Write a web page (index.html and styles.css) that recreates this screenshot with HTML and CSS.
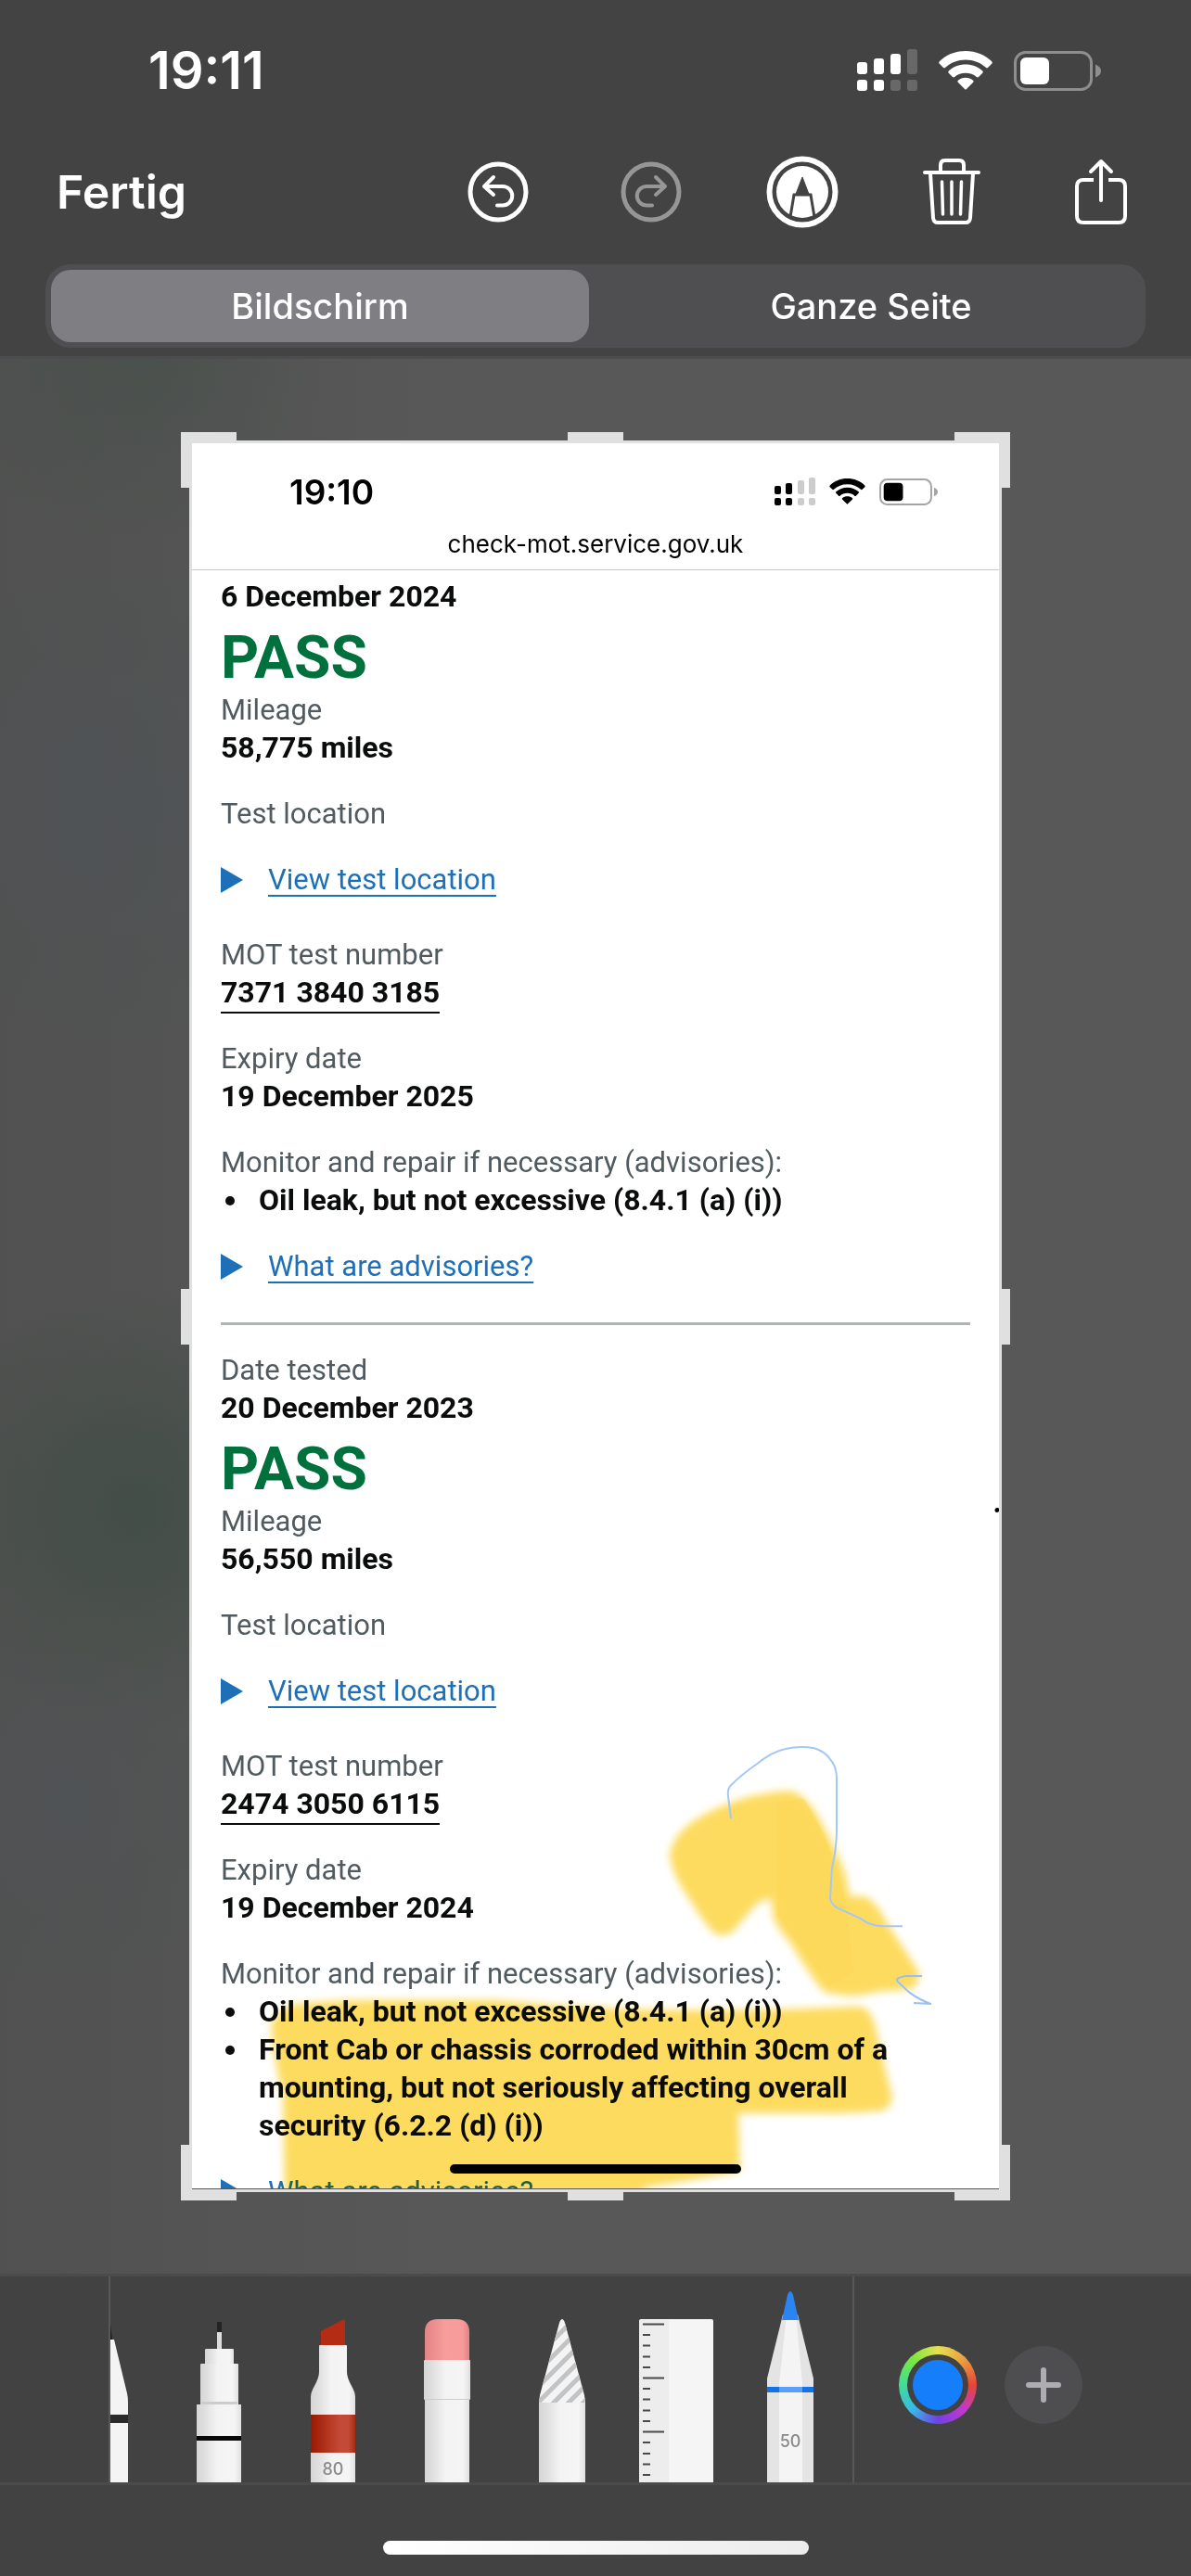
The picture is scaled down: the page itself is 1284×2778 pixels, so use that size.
FILE: index.html
```html
<!DOCTYPE html>
<html lang="de">
<head>
    <meta charset="UTF-8">
    <meta name="viewport" content="width=device-width, initial-scale=1.0">
    <title>Bildschirmfoto</title>
    <link rel="stylesheet" href="styles.css">
</head>
<body>
    <header class="top">
        <div class="status">
            <span class="clock">19:11</span>
            <div class="status-icons">
                <svg width="65" height="46" viewBox="0 0 65 46" fill="#fff">
                    <rect x="0" y="14" width="11" height="13" rx="3"/>
                    <rect x="18" y="10" width="11" height="17" rx="3"/>
                    <rect x="36" y="5" width="11" height="22" rx="3"/>
                    <rect x="54" y="0" width="11" height="27" rx="3" fill="#686868"/>
                    <rect x="0" y="33" width="11" height="12" rx="3"/>
                    <rect x="18" y="33" width="11" height="12" rx="3"/>
                    <rect x="36" y="33" width="11" height="12" rx="3" fill="#686868"/>
                    <rect x="54" y="33" width="11" height="12" rx="3" fill="#686868"/>
                </svg>
                <svg width="58" height="42" viewBox="0 0 58 42" fill="#fff">
                    <path d="M29 0C18 0 8 4 .8 11.200Q-.3 12.500.8 13.800L4.800 17.800Q6 18.800 7.200 17.800C13 12.500 20.500 9.500 29 9.500S45 12.500 50.800 17.800Q52 18.800 53.200 17.800L57.200 13.800Q58.300 12.500 57.200 11.200C50 4 40 0 29 0z"/>
                    <path d="M29 14.500C22 14.500 15.500 17 10.700 21.500Q9.700 22.700 10.700 23.800L15 28Q16 28.800 17.200 28C20.500 25.200 24.500 23.800 29 23.800S37.500 25.200 40.800 28Q42 28.800 43 28L47.300 23.800Q48.300 22.700 47.300 21.500C42.500 17 36 14.500 29 14.500z"/>
                    <path d="M29 28.800C26 28.800 23 29.800 20.800 31.700Q19.800 32.800 20.800 33.800L28 41Q29 42 30 41L37.200 33.800Q38.200 32.800 37.200 31.700C35 29.800 32 28.800 29 28.800z"/>
                </svg>
                <svg width="94" height="43" viewBox="0 0 94 43">
                    <rect x="1.500" y="1.500" width="82" height="40" rx="11" fill="none" stroke="#8e8e8e" stroke-width="3"/>
                    <rect x="7" y="7" width="31" height="29" rx="6" fill="#fff"/>
                    <path d="M88 14.500Q94 17 94 21.500T88 28.500z" fill="#8e8e8e"/>
                </svg>
            </div>
        </div>
        <nav class="actions">
            <button class="done">Fertig</button>
            <div class="action-icons">
                <button class="icon-btn wide" aria-label="Widerrufen">
                    <svg width="66" height="66" viewBox="0 0 66 66" fill="none" stroke="#fff" stroke-width="4" stroke-linecap="round" stroke-linejoin="round">
                        <circle cx="33" cy="33" r="30" stroke-width="5"/>
                        <path d="M28 17L18 27L28 36M18 27H38A10 10 0 0 1 38 47.500H32"/>
                    </svg>
                </button>
                <button class="icon-btn wide" aria-label="Wiederholen" disabled>
                    <svg width="66" height="66" viewBox="0 0 66 66" fill="none" stroke="#969696" stroke-width="4" stroke-linecap="round" stroke-linejoin="round">
                        <circle cx="33" cy="33" r="30" stroke-width="5"/>
                        <path d="M38 17L48 27L38 36M48 27H28A10 10 0 0 0 28 47.500H34"/>
                    </svg>
                </button>
                <button class="icon-btn" aria-label="Markierung">
                    <svg width="78" height="78" viewBox="0 0 78 78">
                        <circle cx="39" cy="39" r="35.500" fill="none" stroke="#fff" stroke-width="6"/>
                        <circle cx="39" cy="39" r="28" fill="#fff"/>
                        <path d="M39 23L46.500 42.500H31.500z" fill="#434343" stroke="#434343" stroke-width="1"/>
                        <path d="M26 66L30 42H48L52 66" fill="none" stroke="#434343" stroke-width="3"/>
                    </svg>
                </button>
                <button class="icon-btn" aria-label="Löschen">
                    <svg width="62" height="72" viewBox="0 0 62 72" fill="none" stroke="#fff" stroke-width="4" stroke-linecap="round" stroke-linejoin="round">
                        <path d="M2 15H60"/>
                        <path d="M19 14V7Q19 2 24 2H39Q44 2 44 7V14"/>
                        <path d="M8 16L11 64Q11.500 69 16 69H46Q50.500 69 51 64L54 16"/>
                        <path d="M20.500 25L21.500 60M31 25V60M41.500 25L40.500 60" stroke-width="3.500"/>
                    </svg>
                </button>
                <button class="icon-btn" aria-label="Teilen">
                    <svg width="58" height="72" viewBox="0 0 58 72" fill="none" stroke="#fff" stroke-width="4" stroke-linecap="round" stroke-linejoin="round">
                        <path d="M21 23H10Q3 23 3 30V62Q3 69 10 69H48Q55 69 55 62V30Q55 23 48 23H37" stroke-linecap="butt"/>
                        <path d="M29 45V3M18 14L29 3L40 14"/>
                    </svg>
                </button>
            </div>
        </nav>
        <div class="segments">
            <button class="segment active" aria-pressed="true">Bildschirm</button>
            <button class="segment" aria-pressed="false">Ganze Seite</button>
        </div>
    </header>

    <main class="canvas">
        <div class="crop">
            <article class="page" lang="en">
                <div class="page-status">
                    <span class="page-clock">19:10</span>
                    <div class="page-icons">
                        <svg width="44" height="31" viewBox="0 0 44 31">
                            <rect x="0" y="9" width="7" height="9" rx="2"/>
                            <rect x="12" y="6" width="7" height="12" rx="2"/>
                            <rect x="25" y="3" width="7" height="15" rx="2" fill="#ccc"/>
                            <rect x="37" y="0" width="7" height="18" rx="2" fill="#ccc"/>
                            <rect x="0" y="22" width="7" height="8" rx="2"/>
                            <rect x="12" y="22" width="7" height="8" rx="2"/>
                            <rect x="25" y="22" width="7" height="8" rx="2" fill="#ccc"/>
                            <rect x="37" y="22" width="7" height="8" rx="2" fill="#ccc"/>
                        </svg>
                        <svg width="39" height="28" viewBox="0 0 58 42">
                            <path d="M29 0C18 0 8 4 .8 11.200Q-.3 12.500.8 13.800L4.800 17.800Q6 18.800 7.200 17.800C13 12.500 20.500 9.500 29 9.500S45 12.500 50.800 17.800Q52 18.800 53.200 17.800L57.200 13.800Q58.300 12.500 57.200 11.200C50 4 40 0 29 0z"/>
                            <path d="M29 14.500C22 14.500 15.500 17 10.700 21.500Q9.700 22.700 10.700 23.800L15 28Q16 28.800 17.200 28C20.500 25.200 24.500 23.800 29 23.800S37.500 25.200 40.800 28Q42 28.800 43 28L47.300 23.800Q48.300 22.700 47.300 21.500C42.500 17 36 14.500 29 14.500z"/>
                            <path d="M29 28.800C26 28.800 23 29.800 20.800 31.700Q19.800 32.800 20.800 33.800L28 41Q29 42 30 41L37.200 33.800Q38.200 32.800 37.200 31.700C35 29.800 32 28.800 29 28.800z"/>
                        </svg>
                        <svg width="63" height="29" viewBox="0 0 94 43">
                            <rect x="1.500" y="1.500" width="82" height="40" rx="11" fill="none" stroke="#a5a5a5" stroke-width="3"/>
                            <rect x="7" y="7" width="31" height="29" rx="6"/>
                            <path d="M88 14.500Q94 17 94 21.500T88 28.500z" fill="#a5a5a5"/>
                        </svg>
                    </div>
                </div>
                <div class="address">check-mot.service.gov.uk</div>

                <section class="test">
                    <div class="value">6 December 2024</div>
                    <div class="result">PASS</div>
                    <div class="label">Mileage</div>
                    <div class="value">58,775 miles</div>
                    <div class="label spaced">Test location</div>
                    <details class="details">
                        <summary><span>View test location</span></summary>
                    </details>
                    <div class="label after-details">MOT test number</div>
                    <div class="value"><span class="number">7371 3840 3185</span></div>
                    <div class="label spaced">Expiry date</div>
                    <div class="value">19 December 2025</div>
                    <div class="label spaced">Monitor and repair if necessary (advisories):</div>
                    <ul class="defects">
                        <li>Oil leak, but not excessive (8.4.1 (a) (i))</li>
                    </ul>
                    <details class="details">
                        <summary><span>What are advisories?</span></summary>
                    </details>
                </section>

                <section class="test next">
                    <div class="label">Date tested</div>
                    <div class="value">20 December 2023</div>
                    <div class="result">PASS</div>
                    <div class="label">Mileage</div>
                    <div class="value">56,550 miles</div>
                    <div class="label spaced">Test location</div>
                    <details class="details">
                        <summary><span>View test location</span></summary>
                    </details>
                    <div class="label after-details">MOT test number</div>
                    <div class="value"><span class="number">2474 3050 6115</span></div>
                    <div class="label spaced">Expiry date</div>
                    <div class="value">19 December 2024</div>
                    <div class="label spaced">Monitor and repair if necessary (advisories):</div>
                    <ul class="defects">
                        <li>Oil leak, but not excessive (8.4.1 (a) (i))</li>
                        <li>Front Cab or chassis corroded within 30cm of a mounting, but not seriously affecting overall security (6.2.2 (d) (i))</li>
                    </ul>
                    <details class="details">
                        <summary><span>What are advisories?</span></summary>
                    </details>
                </section>

                <div class="page-home"></div>

                <!-- marker and pencil strokes -->
                <svg class="ink" viewBox="207 478 870 1883" preserveAspectRatio="none">
                    <defs>
                        <filter id="soft" x="-5%" y="-5%" width="110%" height="110%"><feGaussianBlur stdDeviation="4"/></filter>
                    </defs>
                    <g fill="#fddb5f" filter="url(#soft)">
                        <path d="M722 2002C724 1984 738 1970 755 1960Q778 1947 805 1939Q836 1932 852 1932Q864 1934 878 1953Q902 1994 912 2024Q914 2036 916 2046Q928 2044 937 2048Q950 2060 956 2074L991 2128Q990 2140 984 2146L946 2149Q928 2154 911 2153Q896 2152 887 2148Q870 2126 852 2096Q838 2080 834 2070L831 2048Q820 2050 813 2057L790 2084Q778 2092 768 2084Q756 2070 746 2053Q724 2022 722 2002z"/>
                        <path d="M292 2185Q300 2166 321 2162Q370 2157 416 2158H534L592 2163Q700 2171 840 2168L920 2165Q934 2164 938 2172Q945 2186 950 2214L962 2263Q960 2274 952 2277Q920 2281 887 2280H796L798 2342Q760 2350 700 2359L690 2366H307L305 2263Q300 2240 295 2212z"/>
                    </g>
                    <path d="M838 1945L866 1940Q890 1975 905 2024L912 2054L920 2128L893 2142L838 2066z" fill="#fcd755" opacity=".5"/>
                    <path d="M788 1962L785 1938Q784 1930 788 1926Q800 1914 816 1903Q832 1890 846 1887Q862 1883 878 1886Q890 1890 895 1898Q902 1906 902 1918L902 1974Q902 1994 897 2015L895 2048Q896 2054 902 2058L928 2070Q938 2078 952 2078H973" fill="none" stroke="#a4c8f5" stroke-width="2"/>
                    <path d="M994 2132L976 2132Q964 2134 968 2138L981 2150Q992 2158 1004 2162L985 2161" fill="none" stroke="#96bff3" stroke-width="2"/>
                    <circle cx="1075" cy="1629" r="2.500"/>
                </svg>
            </article>
            <span class="handle tl"></span><span class="handle tc"></span><span class="handle tr"></span>
            <span class="handle ml"></span><span class="handle mr"></span>
            <span class="handle bl"></span><span class="handle bc"></span><span class="handle br"></span>
        </div>
    </main>

    <footer class="bottom">
        <div class="toolbar">
            <div class="tools">
                <button class="tool" aria-label="Stift">
                    <svg width="19" height="206" viewBox="0 0 19 206">
                        <path d="M0 36L2 52H0z" fill="#1c1c1c"/>
                        <path d="M0 52H4L18 110Q19 114 19 120V206H0z" fill="#f4f4f4"/>
                        <rect y="133" width="19" height="9" fill="#2a2a2a"/>
                    </svg>
                </button>
                <button class="tool" aria-label="Fineliner">
                    <svg width="48" height="206" viewBox="0 0 48 206">
                        <defs>
                            <linearGradient id="body">
                                <stop offset="0" stop-color="#d6d6d6"/><stop offset=".18" stop-color="#dfdfdf"/>
                                <stop offset=".45" stop-color="#f3f3f3"/><stop offset=".85" stop-color="#f5f5f5"/><stop offset="1" stop-color="#e0e0e0"/>
                            </linearGradient>
                        </defs>
                        <rect x="22" y="33" width="5" height="12" fill="#242424"/>
                        <rect x="22" y="44" width="5" height="18" fill="#ddd"/>
                        <rect x="9" y="62" width="31" height="17" rx="1" fill="url(#body)"/>
                        <rect x="4" y="78" width="41" height="45" rx="1" fill="url(#body)"/>
                        <rect x="5" y="119" width="39" height="3" fill="#ccc"/>
                        <rect x="0" y="122" width="48" height="84" fill="url(#body)"/>
                        <rect x="0" y="156" width="48" height="5" fill="#080808"/>
                    </svg>
                </button>
                <button class="tool" aria-label="Textmarker">
                    <svg width="50" height="206" viewBox="0 0 50 206">
                        <defs>
                            <linearGradient id="red"><stop offset="0" stop-color="#9c1800"/><stop offset=".65" stop-color="#c34a36"/><stop offset=".85" stop-color="#c34a36"/><stop offset="1" stop-color="#a32a14"/></linearGradient>
                        </defs>
                        <path d="M12 58V43L37 30Q38 30 38 32V58z" fill="#b52c14"/>
                        <path d="M10 59Q10 58 11 58H39Q40 58 40 59V87Q40 93 45 102Q49 109 49 114V206H1V114Q1 109 5 102Q10 93 10 87z" fill="url(#body)"/>
                        <rect x="1" y="133" width="48" height="41" fill="url(#red)"/>
                        <text class="size" x="25" y="198" text-anchor="middle">80</text>
                    </svg>
                </button>
                <button class="tool" aria-label="Radierer">
                    <svg width="50" height="206" viewBox="0 0 50 206">
                        <defs>
                            <linearGradient id="pink"><stop offset="0" stop-color="#e38485"/><stop offset=".45" stop-color="#f89c9c"/><stop offset=".85" stop-color="#f69a9a"/><stop offset="1" stop-color="#e08383"/></linearGradient>
                        </defs>
                        <path d="M1 76V44Q1 30 15 30H35Q49 30 49 44V76z" fill="url(#pink)"/>
                        <rect x="1" y="110" width="48" height="96" fill="url(#body)"/>
                        <rect x="0" y="74" width="50" height="43" rx="1" fill="url(#body)"/>
                        <rect x="1" y="116" width="48" height="1" fill="#ccc"/>
                    </svg>
                </button>
                <button class="tool" aria-label="Lasso">
                    <svg width="50" height="206" viewBox="0 0 50 206">
                        <defs>
                            <clipPath id="cone"><path d="M0 120L1 112L22 34Q25 26 28 34L49 112L50 120z"/></clipPath>
                        </defs>
                        <g clip-path="url(#cone)">
                            <rect width="50" height="120" y="20" fill="#f4f4f4"/>
                            <path d="M-4 72L58 10M-4 89L58 27M-4 106L58 44M-4 123L58 61M-4 140L58 78M12 140L58 94M28 140L58 110" stroke="#c2c3c5" stroke-width="5"/>
                        </g>
                        <rect x="0" y="120" width="50" height="86" fill="url(#body)"/>
                    </svg>
                </button>
                <button class="tool ruler" aria-label="Lineal">
                    <svg width="80" height="206" viewBox="0 0 80 206">
                        <rect x="0" y="30" width="80" height="180" rx="2" fill="#f5f5f5"/>
                        <rect x="0" y="31" width="32" height="180" fill="#ededed"/>
                        <path d="M4 35.500H27M4 93.500H27M4 151.500H27M4 47H12M4 58.500H12M4 70.500H12M4 82H12M4 105H12M4 116.500H12M4 128.500H12M4 140H12M4 163H12M4 175H12M4 186.500H12M4 198H12" stroke="#4a484a" stroke-width="2"/>
                    </svg>
                </button>
                <button class="tool" aria-label="Bleistift">
                    <svg width="50" height="206" viewBox="0 0 50 206">
                        <path d="M0 94L17 25H33L50 94V206H0z" fill="#e4e4e4"/>
                        <path d="M13 100L21 25H31L38 100V206H13z" fill="#f4f4f4"/>
                        <path d="M16 31L22 4Q25 -4 28 4L34 31z" fill="#2c84f2"/>
                        <rect y="103" width="50" height="6" fill="#1272e8"/>
                        <rect x="13" y="103" width="25" height="6" fill="#58a0fa"/>
                        <text class="size" x="25" y="168" text-anchor="middle">50</text>
                    </svg>
                </button>
            </div>
            <div class="palette">
                <button class="color" aria-label="Farbe"><span class="color-gap"><span class="color-dot"></span></span></button>
                <button class="add" aria-label="Hinzufügen">
                    <svg width="38" height="38" viewBox="0 0 38 38" stroke="#aeaeb2" stroke-width="6" stroke-linecap="round">
                        <path d="M19 3V35M3 19H35"/>
                    </svg>
                </button>
            </div>
        </div>
        <div class="home"></div>
    </footer>
</body>
</html>
```

FILE: styles.css
```css
* {
    box-sizing: border-box;
}
body {
    margin: 0;
    min-height: 100vh;
    display: flex;
    flex-direction: column;
    background: #585858;
    font-family: Inter, "Liberation Sans", sans-serif;
    color: #fff;
}
button {
    padding: 0;
    border: 0;
    background: none;
    color: inherit;
    font-family: inherit;
}
svg {
    display: block;
}

/* header */
.top {
    background: #434343;
    border-bottom: 3px solid #4c4c4e;
    padding-bottom: 9px;
}
.status {
    height: 152px;
    padding: 0 97px 0 160px;
    display: flex;
    align-items: center;
    justify-content: space-between;
}
.clock {
    font-size: 56px;
    font-weight: 600;
}
.status-icons {
    display: flex;
    align-items: center;
    gap: 23px;
}
.actions {
    height: 110px;
    padding: 0 55px 0 61px;
    display: flex;
    align-items: center;
    justify-content: space-between;
}
.done {
    font-size: 50px;
    font-weight: 600;
}
.action-icons {
    display: flex;
    align-items: center;
    gap: 77px;
}
.icon-btn {
    width: 84px;
    display: flex;
    justify-content: center;
}
.wide {
    width: 88px;
}
.segments {
    height: 90px;
    margin: 23px 49px 0;
    padding: 6px;
    display: flex;
    gap: 14px;
    border-radius: 27px;
    background: #4f4f51;
}
.segment {
    flex: 1;
    border-radius: 21px;
    font-size: 38px;
    font-weight: 500;
}
.active {
    background: #7f7e83;
}

/* canvas */
.canvas {
    flex: 1;
    padding: 88px 204px;
    background:
        radial-gradient(circle at 150px 1240px, rgba(56, 74, 64, .6), transparent 240px),
        radial-gradient(circle at 150px 0, rgba(66, 78, 72, .5), transparent 200px),
        radial-gradient(circle at 120px 480px, rgba(78, 83, 88, .6), transparent 260px),
        radial-gradient(circle at 60px 1560px, rgba(78, 83, 88, .5), transparent 200px),
        linear-gradient(to right, #505150, #585858 500px);
}
.crop {
    position: relative;
    border: 3px solid #e0e0e0;
}
.handle {
    position: absolute;
    width: 60px;
    height: 60px;
    border: 0 solid #e0e0e0;
}
.tl, .tc, .tr {
    top: -12px;
    border-top-width: 12px;
}
.bl, .bc, .br {
    bottom: -12px;
    border-bottom-width: 12px;
}
.tl, .ml, .bl {
    left: -12px;
    border-left-width: 12px;
}
.tr, .mr, .br {
    right: -12px;
    border-right-width: 12px;
}
.tc, .bc {
    left: calc(50% - 30px);
}
.ml, .mr {
    top: calc(50% - 30px);
}

/* captured web page */
.page {
    position: relative;
    aspect-ratio: 870 / 1883;
    overflow: hidden;
    border-bottom: 1px solid #555;
    background: #fff;
    color: #0b0c0c;
    font-family: Roboto, "Liberation Sans", sans-serif;
    font-size: 31px;
    line-height: 41px;
}
.page-status {
    height: 88px;
    padding: 16px 66px 0 105px;
    display: flex;
    align-items: center;
    justify-content: space-between;
    color: #000;
}
.page-clock {
    font-family: Inter, "Liberation Sans", sans-serif;
    font-size: 37px;
    font-weight: 600;
}
.page-icons {
    display: flex;
    align-items: center;
    gap: 15px;
}
.address {
    height: 49px;
    border-bottom: 1px solid #c8c8c8;
    text-align: center;
    font-family: Inter, "Liberation Sans", sans-serif;
    font-size: 26px;
    color: #000;
}
.test {
    margin: 0 31px;
    padding-top: 8px;
}
.next {
    margin-top: 40px;
    padding-top: 28px;
    border-top: 3px solid #b1b4b6;
}
.label {
    color: #505a5f;
}
.value {
    font-size: 32px;
    font-weight: 700;
}
.result {
    padding-top: 10px;
    color: #00703c;
    font-size: 64px;
    line-height: 71px;
    font-weight: 700;
}
.spaced {
    margin-top: 30px;
}
.after-details {
    margin-top: 40px;
}
.number {
    border-bottom: 2px solid #0b0c0c;
    padding-bottom: 2px;
}
.defects {
    margin: 0;
    padding: 0 40px 0 32px;
    font-size: 32px;
    font-weight: 700;
}
.defects li {
    padding-left: 9px;
}
.details {
    margin-top: 30px;
}
.details summary {
    display: flex;
    align-items: center;
    gap: 27px;
    list-style: none;
    color: #1d70b8;
}
.details summary::before {
    content: "";
    border-style: solid;
    border-color: transparent transparent transparent #1d70b8;
    border-width: 14px 0 14px 24px;
}
.details summary span {
    text-decoration: underline;
    text-decoration-thickness: 2px;
    text-underline-offset: 6px;
}
.page-home {
    position: absolute;
    bottom: 16px;
    left: 32%;
    width: 36%;
    height: 10px;
    border-radius: 5px;
    background: #000;
}
.ink {
    position: absolute;
    top: 0;
    left: 0;
    width: 100%;
    height: 100%;
    mix-blend-mode: multiply;
}

/* drawing tools */
.bottom {
    background: #424242;
    border-top: 3px solid #4b4b4d;
}
.toolbar {
    display: flex;
    border-bottom: 3px solid #4b4b4e;
}
.tools {
    flex: 1;
    margin-left: 117px;
    padding: 16px 42px 0 0;
    display: flex;
    justify-content: space-between;
    border-left: 2px solid #58585b;
    border-right: 2px solid #58585b;
}
.ruler {
    margin: 0 -16px;
}
.size {
    font-family: Inter, "Liberation Sans", sans-serif;
    font-size: 18px;
    font-weight: 500;
    fill: #8a8a8d;
}
.palette {
    width: 363px;
    padding: 12px 0 0 48px;
    display: flex;
    align-items: center;
    gap: 30px;
}
.color {
    width: 84px;
    height: 84px;
    padding: 9px;
    border-radius: 50%;
    background: conic-gradient(#e6e050, #e8a040, #e84438, #c038d0, #7040e8, #38b8e8, #40dc98, #78e840, #e6e050);
}
.color-gap {
    display: block;
    padding: 6px;
    border-radius: 50%;
    background: #424242;
}
.color-dot {
    display: block;
    height: 54px;
    border-radius: 50%;
    background: #157efb;
}
.add {
    width: 84px;
    height: 84px;
    display: flex;
    align-items: center;
    justify-content: center;
    border-radius: 50%;
    background: #4e4e50;
}
.home {
    width: 459px;
    height: 15px;
    margin: 60px auto 24px;
    border-radius: 8px;
    background: linear-gradient(to right, #fff, #ececec);
}
```
